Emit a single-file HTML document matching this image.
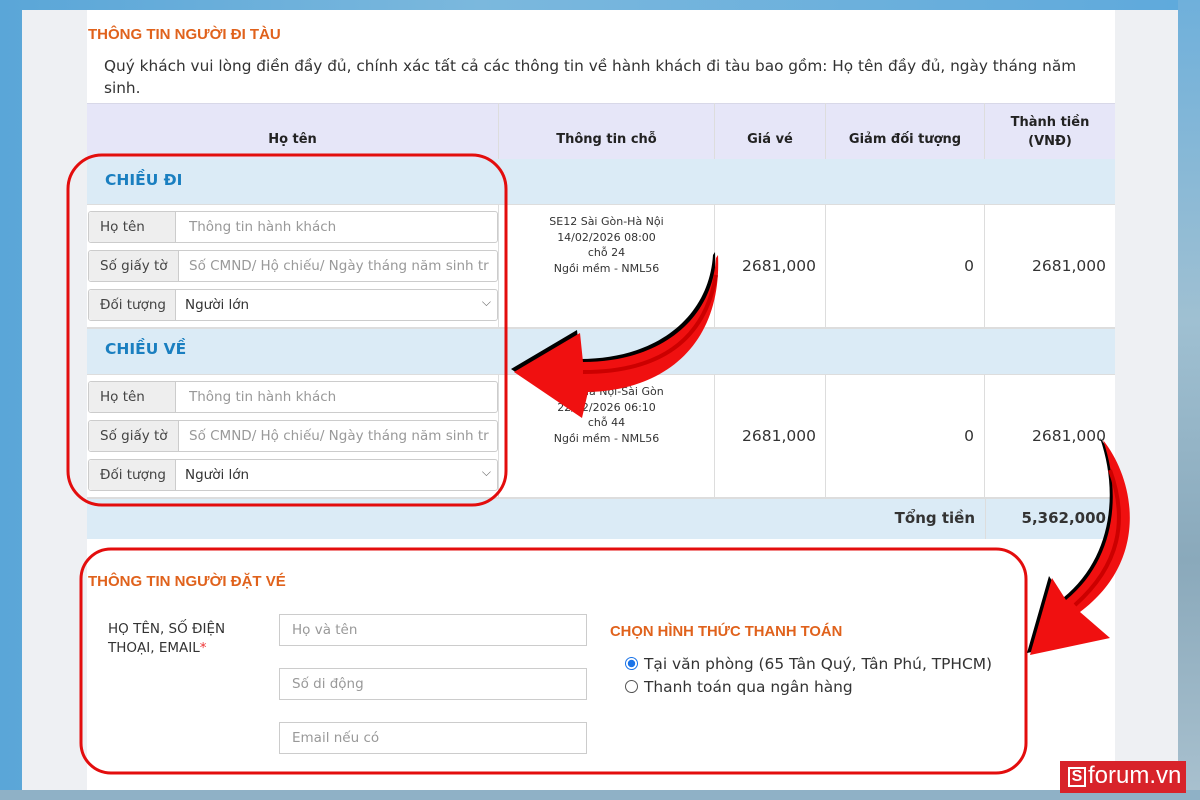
<!DOCTYPE html>
<html><head><meta charset="utf-8"><style>
*{box-sizing:border-box;margin:0;padding:0}
body{width:1200px;height:800px;overflow:hidden;position:relative;font-family:"DejaVu Sans","Liberation Sans",sans-serif;background:linear-gradient(90deg,#5aa6d8 0%,#7bb8dd 40%,#5ea9dc 100%)}
.a{position:absolute}
.t{font-family:"Liberation Sans",sans-serif;font-weight:bold;color:#e0621c;font-size:15px}
.cell{position:absolute;border-right:1px solid #ddd}
.inp{position:absolute;border:1px solid #ccc;border-radius:3px;background:#fff;height:32px;font-size:13.5px;color:#999}
.lab{position:absolute;left:0;top:0;bottom:0;width:87px;background:#eee;border-right:1px solid #ccc;color:#444;padding-left:11px;line-height:30px;border-radius:3px 0 0 3px}
.ph{position:absolute;left:100px;top:0;line-height:30px;white-space:nowrap;overflow:hidden;right:8px}
.hd{font-family:"DejaVu Sans",sans-serif;font-weight:bold;font-size:13px;color:#222;text-align:center}
.num{font-size:15.5px;color:#333}
.f{position:absolute;border:1px solid #ccc;background:#fff;height:32px;width:308px;left:279px;font-size:13.5px;color:#999;padding-left:12px;line-height:30px}
</style></head><body>
<div class="a" style="left:1178px;top:0;width:22px;height:800px;background:linear-gradient(180deg,#6fb0db 0%,#9fc0d2 40%,#8aa9bb 70%,#a9c1cf 100%)"></div>
<div class="a" style="left:0;top:790px;width:1200px;height:10px;background:#8fb1c6"></div>
<div class="a" style="left:22px;top:10px;width:1156px;height:780px;background:#eef0f3"></div>
<div class="a" style="left:87px;top:10px;width:1028px;height:780px;background:#fff"></div>

<div class="a t" style="left:88px;top:26px">THÔNG TIN NGƯỜI ĐI TÀU</div>
<div class="a" style="left:104px;top:55px;width:990px;font-size:15.3px;color:#333;line-height:22px">Quý khách vui lòng điền đầy đủ, chính xác tất cả các thông tin về hành khách đi tàu bao gồm: Họ tên đầy đủ, ngày tháng năm sinh.</div>

<div class="a" style="left:87px;top:103px;width:1028px;height:56px;background:#e6e6f8;border-top:1px solid #d8d8e8"></div>
<div class="cell hd" style="left:87px;top:103px;width:412px;height:56px;padding-top:29px">Họ tên</div>
<div class="cell hd" style="left:499px;top:103px;width:216px;height:56px;padding-top:29px">Thông tin chỗ</div>
<div class="cell hd" style="left:715px;top:103px;width:111px;height:56px;padding-top:29px">Giá vé</div>
<div class="cell hd" style="left:826px;top:103px;width:159px;height:56px;padding-top:29px">Giảm đối tượng</div>
<div class="cell hd" style="left:985px;top:103px;width:130px;height:56px;padding-top:10px;line-height:19px;border-right:none">Thành tiền<br>(VNĐ)</div>

<div class="a" style="left:87px;top:159px;width:1028px;height:46px;background:#dbebf6;border-bottom:1px solid #ddd"></div>
<div class="a" style="left:105px;top:171px;font-weight:bold;color:#1a7fc0;font-size:15.5px">CHIỀU ĐI</div>
<div class="cell" style="left:87px;top:205px;width:412px;height:122px"></div>
<div class="cell" style="left:499px;top:205px;width:216px;height:122px;font-size:11px;color:#333;text-align:center;line-height:15.5px;padding-top:9px">SE12 Sài Gòn-Hà Nội<br>14/02/2026 08:00<br>chỗ 24<br>Ngồi mềm - NML56</div>
<div class="cell num" style="left:715px;top:205px;width:111px;height:122px;text-align:right;padding:52px 9px 0 0">2681,000</div>
<div class="cell num" style="left:826px;top:205px;width:159px;height:122px;text-align:right;padding:52px 10px 0 0">0</div>
<div class="a num" style="left:985px;top:205px;width:130px;height:122px;text-align:right;padding:52px 9px 0 0">2681,000</div>
<div class="inp" style="left:88px;top:211px;width:410px"><div class="lab">Họ tên</div><div class="ph" style="left:100px">Thông tin hành khách</div></div>
<div class="inp" style="left:88px;top:250px;width:410px"><div class="lab" style="width:90px">Số giấy tờ</div><div class="ph">Số CMND/ Hộ chiếu/ Ngày tháng năm sinh trẻ em</div></div>
<div class="inp" style="left:88px;top:289px;width:410px;color:#333"><div class="lab">Đối tượng</div><div class="ph" style="left:96px">Người lớn</div><div class="a" style="right:6px;top:5px;color:#666;font-size:12px">⌵</div></div>

<div class="a" style="left:87px;top:327px;width:1028px;height:48px;background:#dbebf6;border-top:2px solid #ddd;border-bottom:1px solid #ddd"></div>
<div class="a" style="left:105px;top:340px;font-weight:bold;color:#1a7fc0;font-size:15.5px">CHIỀU VỀ</div>
<div class="cell" style="left:87px;top:375px;width:412px;height:122px"></div>
<div class="cell" style="left:499px;top:375px;width:216px;height:122px;font-size:11px;color:#333;text-align:center;line-height:15.5px;padding-top:9px">SE11 Hà Nội-Sài Gòn<br>22/02/2026 06:10<br>chỗ 44<br>Ngồi mềm - NML56</div>
<div class="cell num" style="left:715px;top:375px;width:111px;height:122px;text-align:right;padding:52px 9px 0 0">2681,000</div>
<div class="cell num" style="left:826px;top:375px;width:159px;height:122px;text-align:right;padding:52px 10px 0 0">0</div>
<div class="a num" style="left:985px;top:375px;width:130px;height:122px;text-align:right;padding:52px 9px 0 0">2681,000</div>
<div class="inp" style="left:88px;top:381px;width:410px"><div class="lab">Họ tên</div><div class="ph">Thông tin hành khách</div></div>
<div class="inp" style="left:88px;top:420px;width:410px"><div class="lab" style="width:90px">Số giấy tờ</div><div class="ph">Số CMND/ Hộ chiếu/ Ngày tháng năm sinh trẻ em</div></div>
<div class="inp" style="left:88px;top:459px;width:410px;color:#333"><div class="lab">Đối tượng</div><div class="ph" style="left:96px">Người lớn</div><div class="a" style="right:6px;top:5px;color:#666;font-size:12px">⌵</div></div>

<div class="a" style="left:87px;top:497px;width:1028px;height:42px;background:#dbebf6;border-top:2px solid #ddd"></div>
<div class="a" style="left:985px;top:497px;width:1px;height:42px;background:#ddd"></div>
<div class="a" style="left:800px;top:509px;width:175px;text-align:right;font-weight:bold;font-size:15px;color:#333">Tổng tiền</div>
<div class="a" style="left:985px;top:509px;width:121px;text-align:right;font-weight:bold;font-size:15px;color:#333">5,362,000</div>

<div class="a t" style="left:88px;top:573px">THÔNG TIN NGƯỜI ĐẶT VÉ</div>
<div class="a" style="left:108px;top:620px;font-size:13.5px;color:#333;line-height:19px">HỌ TÊN, SỐ ĐIỆN<br>THOẠI, EMAIL<span style="color:#e33">*</span></div>
<div class="f" style="top:614px">Họ và tên</div>
<div class="f" style="top:668px">Số di động</div>
<div class="f" style="top:722px">Email nếu có</div>
<div class="a t" style="left:610px;top:624px;font-size:14.8px">CHỌN HÌNH THỨC THANH TOÁN</div>
<div class="a" style="left:625px;top:653px;font-size:15.4px;color:#333;line-height:23px">
<div><span style="display:inline-block;width:13px;height:13px;border-radius:50%;border:1px solid #1a73e8;background:radial-gradient(circle,#1a73e8 45%,#fff 50%);vertical-align:-1px;margin-right:6px"></span>Tại văn phòng (65 Tân Quý, Tân Phú, TPHCM)</div>
<div><span style="display:inline-block;width:13px;height:13px;border-radius:50%;border:1px solid #555;vertical-align:-1px;margin-right:6px"></span>Thanh toán qua ngân hàng</div>
</div>

<svg class="a" style="left:0;top:0" width="1200" height="800">
<rect x="68" y="155" width="438" height="350" rx="34" fill="none" stroke="#e30d0d" stroke-width="3"/>
<rect x="81" y="549" width="945" height="224" rx="30" fill="none" stroke="#e30d0d" stroke-width="3"/>
<g transform="translate(-3,-3)"><path d="M716,258 C712,320 660,362 583,362 L580,333 L514,372 L582,418 L588,392 C670,390 722,340 718,255 Z" fill="#000"/></g>
<path d="M716,258 C712,320 660,362 583,362 L580,333 L514,372 L582,418 L588,392 C670,390 722,340 718,255 Z" fill="#f01010"/>
<path d="M583,372 C660,372 705,340 716,275" fill="none" stroke="#c00" stroke-width="4"/>
<g transform="translate(-3,-2)"><path d="M1103,440 C1135,480 1150,560 1080,612 L1110,638 L1030,655 L1052,578 L1066,600 C1115,560 1122,495 1103,440 Z" fill="#000"/></g>
<path d="M1103,440 C1135,480 1150,560 1080,612 L1110,638 L1030,655 L1052,578 L1066,600 C1115,560 1122,495 1103,440 Z" fill="#f01010"/>
<path d="M1110,470 C1128,520 1120,565 1075,605" fill="none" stroke="#c00" stroke-width="4"/>
</svg>

<div class="a" style="left:1060px;top:761px;width:126px;height:32px;background:#d8232a"></div>
<div class="a" style="left:1068px;top:767px;width:18px;height:20px;border:2px solid #fff;color:#fff;font:bold 16px/16px 'Liberation Sans',sans-serif;text-align:center">S</div>
<div class="a" style="left:1088px;top:763px;color:#fff;font:24px/26px 'Liberation Sans',sans-serif">forum.vn</div>
</body></html>
